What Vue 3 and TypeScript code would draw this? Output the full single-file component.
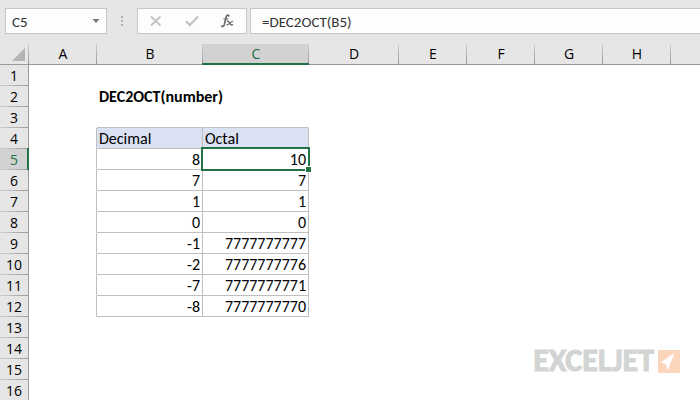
<script setup lang="ts">
import { ref } from 'vue'

interface Cell {
  text: string
  kind: 'blank' | 'title' | 'head' | 'value'
}

const columns = ['A', 'B', 'C', 'D', 'E', 'F', 'G', 'H', '']
const activeColumn = 'C'
const activeRow = 5
const rowCount = 16
const firstDataRow = 5

const nameBox = ref('C5')
const formula = ref('=DEC2OCT(B5)')

const data: [string, string][] = [
  ['8', '10'],
  ['7', '7'],
  ['1', '1'],
  ['0', '0'],
  ['-1', '7777777777'],
  ['-2', '7777777776'],
  ['-7', '7777777771'],
  ['-8', '7777777770'],
]

function cellAt(column: string, row: number): Cell {
  if (column === 'B' && row === 2) return { text: 'DEC2OCT(number)', kind: 'title' }
  const index = ['B', 'C'].indexOf(column)
  if (index >= 0) {
    if (row === 4) return { text: ['Decimal', 'Octal'][index], kind: 'head' }
    const record = data[row - firstDataRow]
    if (record) return { text: record[index], kind: 'value' }
  }
  return { text: '', kind: 'blank' }
}

function cellClasses(column: string, row: number) {
  const inRows = row >= 4 && row <= 12
  return [
    cellAt(column, row).kind,
    {
      'line-right': inRows && ['A', 'B', 'C'].includes(column),
      'line-bottom': row >= 3 && row <= 12 && ['B', 'C'].includes(column),
    },
  ]
}

function isActive(column: string, row: number): boolean {
  return column === activeColumn && row === activeRow
}
</script>

<template>
  <main class="workbook">
    <header class="formula-bar">
      <div class="box name-box">
        <input v-model="nameBox" class="field" type="text" aria-label="Name box" />
        <button class="drop" type="button" aria-label="Show names">
          <svg width="8" height="5" viewBox="0 0 8 5"><path d="M0.5 0h7L4 4z" fill="#777" /></svg>
        </button>
      </div>
      <div class="grip"><i></i><i></i><i></i></div>
      <div class="box actions">
        <button type="button" aria-label="Cancel">
          <svg width="12" height="12" viewBox="0 0 12 12">
            <path d="M1 1.5 10.5 10.5M10.5 1.5 1 10.5" fill="none" stroke="#c4c4c4" stroke-width="1.8" />
          </svg>
        </button>
        <button type="button" aria-label="Enter">
          <svg width="14" height="12" viewBox="0 0 14 12">
            <path d="M1 6.3 4.8 10 13 1.5" fill="none" stroke="#c4c4c4" stroke-width="2.3" />
          </svg>
        </button>
        <button type="button" aria-label="Insert function">
          <svg width="13" height="14" viewBox="0 0 13 14" fill="none" stroke="#666" stroke-linecap="round">
            <path d="M7.8 1.8C6.9.6 5.7 1 5.2 3L3.3 10.6C2.9 12.4 1.8 13 .8 12.1" stroke-width="1.6" />
            <path d="M2.8 5H7" stroke-width="1.2" />
            <path d="M6.4 7.3C8.2 6.5 8.6 11.8 11.4 10.8" stroke-width="1.5" />
            <path d="M11.8 7.2C9.9 6.8 8.2 11.6 5.8 10.8" stroke-width="1.1" />
          </svg>
        </button>
      </div>
      <div class="box formula">
        <input v-model="formula" class="field" type="text" aria-label="Formula" />
      </div>
    </header>

    <table class="sheet">
      <colgroup>
        <col class="w-index" />
        <col class="w-base" />
        <col class="w-data" />
        <col class="w-data" />
        <col class="w-wide" />
        <col class="w-base" />
        <col class="w-base" />
        <col class="w-base" />
        <col class="w-base" />
        <col />
      </colgroup>
      <thead>
        <tr>
          <th class="corner">
            <svg width="13" height="13" viewBox="0 0 13 13"><path d="M13 0v13H0z" fill="#b4b4b4" /></svg>
          </th>
          <th v-for="column in columns" :key="column" scope="col" :class="{ current: column === activeColumn }">
            {{ column }}
          </th>
        </tr>
      </thead>
      <tbody>
        <tr v-for="row in rowCount" :key="row">
          <th scope="row" :class="{ current: row === activeRow }">{{ row }}</th>
          <td v-for="column in columns" :key="column" :class="cellClasses(column, row)">
            {{ cellAt(column, row).text }}
            <span v-if="isActive(column, row)" class="selection"></span>
          </td>
        </tr>
      </tbody>
    </table>

    <div class="brand">
      <span>EXCELJET</span>
      <svg width="22" height="23" viewBox="0 0 22 23">
        <path d="M0 0h22v23H0z" fill="#fbd5bc" />
        <path d="M16.5 3 3 12l4.6 2.2L10 20z" fill="#fff" />
      </svg>
    </div>
  </main>
</template>

<style>
body {
  margin: 0;
  background: #fff;
}
</style>

<style scoped>
.workbook {
  position: relative;
  overflow: hidden;
  font-family: Carlito, Lato, sans-serif;
  color: #000;
}

.formula-bar {
  display: flex;
  padding: 8px 0 10px 5px;
  background: #e6e6e6;
}

.box {
  display: flex;
  box-sizing: border-box;
  height: 26px;
  border: 1px solid #c6c6c6;
  background: #fdfdfd;
}

.field {
  flex: 1;
  min-width: 0;
  padding: 2px 0 0;
  border: 0;
  outline: 0;
  background: transparent;
  font-family: inherit;
  font-size: 15px;
  color: #333;
}

.name-box {
  width: 102px;
  padding: 0 6px;
}

button {
  display: flex;
  align-items: center;
  justify-content: center;
  padding: 0;
  border: 0;
  background: none;
}

.drop {
  width: 8px;
}

.grip {
  display: flex;
  flex-direction: column;
  align-items: center;
  justify-content: center;
  gap: 2px;
  width: 30px;
}

.grip i {
  width: 2px;
  height: 2px;
  background: #b0b0b0;
}

.actions {
  width: 110px;
  padding: 0 12px;
  justify-content: space-between;
}

.formula {
  flex: 1;
  margin-left: 3px;
  padding-left: 11px;
  border-right: 0;
}

.sheet {
  width: 100%;
  table-layout: fixed;
  border-collapse: separate;
  border-spacing: 0;
  line-height: 20px;
}

.w-index {
  width: 29px;
}

.w-base {
  width: 68px;
}

.w-data {
  width: 106px;
}

.w-wide {
  width: 90px;
}

th,
td {
  position: relative;
  box-sizing: border-box;
  height: 21px;
  padding: 0;
  white-space: nowrap;
}

th {
  background: #e6e6e6;
  font-family: 'Open Sans', 'Noto Sans', sans-serif;
  font-size: 14px;
  font-weight: 400;
  text-align: center;
}

thead th {
  border-bottom: 1px solid #999;
}

thead th::before {
  content: '';
  position: absolute;
  top: 0;
  right: 0;
  bottom: 0;
  width: 1px;
  background: linear-gradient(#d0d0d0, #999);
}

thead th:last-child::before {
  display: none;
}

.corner svg {
  display: block;
  margin: 4px 0 3px 12px;
}

tbody th {
  border-right: 1px solid #999;
}

tbody th::before {
  content: '';
  position: absolute;
  right: 0;
  bottom: 0;
  left: 0;
  height: 1px;
  background: linear-gradient(to right, #d0d0d0, #999);
}

th.current {
  background: #d2d2d2;
  color: #217346;
}

thead th.current::after {
  content: '';
  position: absolute;
  right: 0;
  bottom: -1px;
  left: -1px;
  height: 2px;
  background: #217346;
}

tbody th.current::after {
  content: '';
  position: absolute;
  top: -1px;
  right: -1px;
  bottom: 0;
  width: 2px;
  background: #217346;
}

td {
  padding: 2px 2px 0;
  border-right: 1px solid transparent;
  border-bottom: 1px solid transparent;
  font-size: 16px;
  line-height: 18px;
}

.line-right {
  border-right-color: #bfbfbf;
}

.line-bottom {
  border-bottom-color: #bfbfbf;
}

.title {
  font-weight: 700;
}

.head {
  background: #d9e1f2;
  background-clip: padding-box;
}

.value {
  text-align: right;
}

.selection {
  position: absolute;
  z-index: 1;
  inset: -2px;
  border: 2px solid #217346;
}

.selection::after {
  content: '';
  position: absolute;
  right: -3px;
  bottom: -3px;
  width: 5px;
  height: 5px;
  background: #217346;
  box-shadow: 0 0 0 1px #fff;
}

.brand {
  position: absolute;
  right: 20px;
  bottom: 24px;
  display: flex;
  align-items: center;
  gap: 4px;
  line-height: 32px;
  font-size: 32px;
  font-weight: 700;
  color: #d3d5d4;
  -webkit-text-stroke: 1px #d3d5d4;
}
</style>
